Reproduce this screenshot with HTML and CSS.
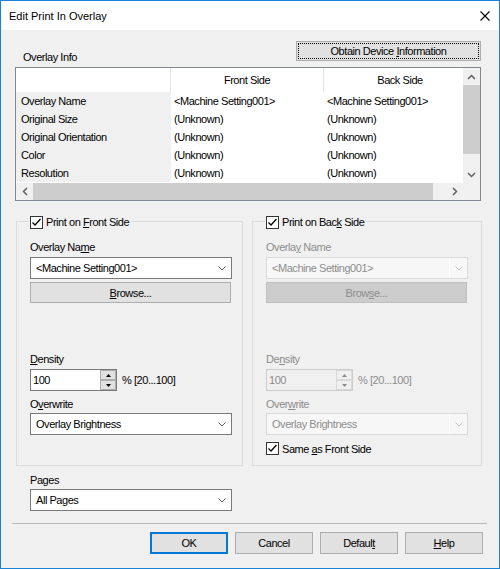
FILE: index.html
```html
<!DOCTYPE html>
<html lang="en">
<head>
    <meta charset="UTF-8">
    <title>Edit Print In Overlay</title>
    <link rel="stylesheet" href="styles.css">
</head>
<body>
<div class="window">
    <div class="titlebar">
        <span class="title">Edit Print In Overlay</span>
        <svg class="close" width="10" height="10" viewBox="0 0 10 10"><path d="M0.5 0.5L9.5 9.5M9.5 0.5L0.5 9.5" stroke="#000" stroke-width="1.1"/></svg>
    </div>

    <div class="client">
        <div class="info-head">
            <span class="caption">Overlay Info</span>
            <button class="btn btn-obtain">Obtain Device <u>I</u>nformation</button>
        </div>

        <!-- overlay info list -->
        <div class="listview">
            <div class="lv-view">
                <div class="lv-row lv-header">
                    <div class="cell"></div>
                    <div class="cell">Front Side</div>
                    <div class="cell">Back Side</div>
                </div>
                <div class="lv-row">
                    <div class="cell name">Overlay Name</div>
                    <div class="cell">&lt;Machine Setting001&gt;</div>
                    <div class="cell">&lt;Machine Setting001&gt;</div>
                </div>
                <div class="lv-row">
                    <div class="cell name">Original Size</div>
                    <div class="cell">(Unknown)</div>
                    <div class="cell">(Unknown)</div>
                </div>
                <div class="lv-row">
                    <div class="cell name">Original Orientation</div>
                    <div class="cell">(Unknown)</div>
                    <div class="cell">(Unknown)</div>
                </div>
                <div class="lv-row">
                    <div class="cell name">Color</div>
                    <div class="cell">(Unknown)</div>
                    <div class="cell">(Unknown)</div>
                </div>
                <div class="lv-row">
                    <div class="cell name">Resolution</div>
                    <div class="cell">(Unknown)</div>
                    <div class="cell">(Unknown)</div>
                </div>
            </div>
            <div class="vscroll">
                <span class="sb-arrow"><svg width="9" height="6" viewBox="0 0 9 6"><path d="M1 5L4.5 1.5L8 5" fill="none" stroke="#606060" stroke-width="1.5"/></svg></span>
                <span class="sb-track"><span class="sb-thumb v"></span></span>
                <span class="sb-arrow"><svg width="9" height="6" viewBox="0 0 9 6"><path d="M1 1L4.5 4.5L8 1" fill="none" stroke="#606060" stroke-width="1.5"/></svg></span>
            </div>
            <div class="hscroll">
                <span class="sb-arrow"><svg width="6" height="9" viewBox="0 0 6 9"><path d="M5 1L1.5 4.5L5 8" fill="none" stroke="#606060" stroke-width="1.5"/></svg></span>
                <span class="sb-track"><span class="sb-thumb h"></span></span>
                <span class="sb-arrow"><svg width="6" height="9" viewBox="0 0 6 9"><path d="M1 1L4.5 4.5L1 8" fill="none" stroke="#606060" stroke-width="1.5"/></svg></span>
            </div>
            <div class="corner"></div>
        </div>

        <div class="groups">
            <!-- front side -->
            <div class="group">
                <div class="group-title">
                    <svg class="check" width="13" height="13" viewBox="0 0 13 13"><rect x="0.5" y="0.5" width="12" height="12" fill="#fff" stroke="#333"/><path d="M2.5 6.5L5 9L10.5 3" fill="none" stroke="#000" stroke-width="1.3"/></svg>
                    <span>Print on <u>F</u>ront Side</span>
                </div>
                <div class="field-label lbl-name">Overlay Na<u>m</u>e</div>
                <div class="combo">
                    <span>&lt;Machine Setting001&gt;</span>
                    <svg width="8" height="5" viewBox="0 0 8 5"><path d="M0.5 0.5L4 4L7.5 0.5" fill="none" stroke="#5f5f5f"/></svg>
                </div>
                <button class="btn btn-browse"><u>B</u>rowse...</button>
                <div class="field-label lbl-density"><u>D</u>ensity</div>
                <div class="spin-row">
                    <div class="spin">
                        <span class="spin-text">100</span>
                        <span class="spin-btns">
                            <span class="spin-btn"><svg width="5" height="3" viewBox="0 0 5 3"><path d="M0 3L2.5 0L5 3Z" fill="#000"/></svg></span>
                            <span class="spin-btn"><svg width="5" height="3" viewBox="0 0 5 3"><path d="M0 0L2.5 3L5 0Z" fill="#000"/></svg></span>
                        </span>
                    </div>
                    <span class="range">% [20...100]</span>
                </div>
                <div class="field-label lbl-overwrite">O<u>v</u>erwrite</div>
                <div class="combo combo-tight">
                    <span>Overlay Brightness</span>
                    <svg width="8" height="5" viewBox="0 0 8 5"><path d="M0.5 0.5L4 4L7.5 0.5" fill="none" stroke="#5f5f5f"/></svg>
                </div>
            </div>

            <!-- back side -->
            <div class="group disabled">
                <div class="group-title">
                    <svg class="check" width="13" height="13" viewBox="0 0 13 13"><rect x="0.5" y="0.5" width="12" height="12" fill="#fff" stroke="#333"/><path d="M2.5 6.5L5 9L10.5 3" fill="none" stroke="#000" stroke-width="1.3"/></svg>
                    <span>Print on Bac<u>k</u> Side</span>
                </div>
                <div class="field-label lbl-name">Overla<u>y</u> Name</div>
                <div class="combo">
                    <span>&lt;Machine Setting001&gt;</span>
                    <span class="combo-arrow"><svg width="8" height="5" viewBox="0 0 8 5"><path d="M0.5 0.5L4 4L7.5 0.5" fill="none" stroke="#c4c4c4"/></svg></span>
                </div>
                <button class="btn btn-browse">Brow<u>s</u>e...</button>
                <div class="field-label lbl-density">De<u>n</u>sity</div>
                <div class="spin-row">
                    <div class="spin">
                        <span class="spin-text">100</span>
                        <span class="spin-btns">
                            <span class="spin-btn"><svg width="5" height="3" viewBox="0 0 5 3"><path d="M0 3L2.5 0L5 3Z" fill="#8a8a8a"/></svg></span>
                            <span class="spin-btn"><svg width="5" height="3" viewBox="0 0 5 3"><path d="M0 0L2.5 3L5 0Z" fill="#8a8a8a"/></svg></span>
                        </span>
                    </div>
                    <span class="range">% [20...100]</span>
                </div>
                <div class="field-label lbl-overwrite">Over<u>w</u>rite</div>
                <div class="combo combo-tight">
                    <span>Overlay Brightness</span>
                    <span class="combo-arrow"><svg width="8" height="5" viewBox="0 0 8 5"><path d="M0.5 0.5L4 4L7.5 0.5" fill="none" stroke="#c4c4c4"/></svg></span>
                </div>
                <div class="same-as">
                    <svg class="check" width="13" height="13" viewBox="0 0 13 13"><rect x="0.5" y="0.5" width="12" height="12" fill="#fff" stroke="#333"/><path d="M2.5 6.5L5 9L10.5 3" fill="none" stroke="#000" stroke-width="1.3"/></svg>
                    <span>Same <u>a</u>s Front Side</span>
                </div>
            </div>
        </div>

        <div class="pages">
            <div class="field-label">Pages</div>
            <div class="combo combo-tight">
                <span>All Pages</span>
                <svg width="8" height="5" viewBox="0 0 8 5"><path d="M0.5 0.5L4 4L7.5 0.5" fill="none" stroke="#5f5f5f"/></svg>
            </div>
        </div>

        <div class="separator"></div>

        <div class="actions">
            <button class="btn btn-default">OK</button>
            <button class="btn">Cancel</button>
            <button class="btn">Defaul<u>t</u></button>
            <button class="btn"><u>H</u>elp</button>
        </div>
    </div>
</div>
</body>
</html>
```

FILE: styles.css
```css
* {
    box-sizing: border-box;
}

body {
    margin: 0;
    font-family: "Liberation Sans", Arial, sans-serif;
    font-size: 11px;
    letter-spacing: -0.45px;
    color: #000;
}

.window {
    width: 500px;
    height: 569px;
    border: 1px solid #1883d7;
    background: #f0f0f0;
    display: flex;
    flex-direction: column;
}

.titlebar {
    height: 29px;
    background: #fff;
    display: flex;
    align-items: center;
    justify-content: space-between;
    padding: 0 9px 0 8px;
}

.title {
    letter-spacing: 0;
}

.client {
    flex: 1;
    padding: 11px 18px 0 14px;
    display: flex;
    flex-direction: column;
}

/* buttons */
.btn {
    font: inherit;
    letter-spacing: inherit;
    color: #000;
    background: #e1e1e1;
    border: 1px solid #adadad;
    height: 22px;
    width: 78px;
    padding: 0;
    line-height: 18px;
}

.btn-default {
    border-color: #0078d7;
    box-shadow: inset 0 0 0 1px #0078d7;
}

.info-head {
    display: flex;
    justify-content: space-between;
    align-items: flex-start;
    height: 23px;
}

.caption {
    margin: 10px 0 0 8px;
    line-height: 13px;
}

.btn-obtain {
    width: 185px;
    height: 20px;
    outline: 1px dotted #000;
    outline-offset: -3px;
}

/* list view */
.listview {
    margin-top: 3px;
    height: 134px;
    border: 1px solid #828790;
    background: #fff;
    display: grid;
    grid-template-columns: 1fr 17px;
    grid-template-rows: 1fr 17px;
}

.lv-view {
    overflow: hidden;
}

.lv-row {
    display: grid;
    grid-template-columns: 155px 153px 153px;
    height: 18px;
    line-height: 18px;
    white-space: nowrap;
}

.lv-row .cell {
    padding-left: 3px;
}

.lv-row .cell.name {
    background: #f0f0f0;
    padding-left: 5px;
}

.lv-header {
    height: 24px;
    line-height: 24px;
}

.lv-header .cell {
    text-align: center;
    padding: 0;
    border-right: 1px solid #e5e5e5;
}

.vscroll, .hscroll {
    background: #f0f0f0;
    display: flex;
}

.vscroll {
    flex-direction: column;
}

.sb-arrow {
    width: 17px;
    height: 17px;
    display: flex;
    align-items: center;
    justify-content: center;
    flex-shrink: 0;
}

.sb-track {
    flex: 1;
    display: flex;
}

.vscroll .sb-track {
    flex-direction: column;
}

.sb-thumb {
    background: #cdcdcd;
}

.sb-thumb.v {
    height: 69px;
}

.sb-thumb.h {
    width: 400px;
}

.corner {
    background: #f0f0f0;
}

/* side groups */
.groups {
    display: grid;
    grid-template-columns: 227px 230px;
    column-gap: 9px;
    margin: 20px 0 0 1px;
}

.group {
    border: 1px solid #dcdcdc;
    height: 245px;
    padding: 0 13px;
    display: flex;
    flex-direction: column;
    align-items: flex-start;
}

.group-title {
    display: flex;
    align-items: center;
    gap: 3px;
    height: 13px;
    margin: -6px 0 0 -1px;
    padding: 0 2px 0 1px;
    background: #f0f0f0;
    line-height: 13px;
}

.field-label {
    line-height: 13px;
    height: 13px;
}

.lbl-name {
    margin-top: 12px;
}

.lbl-density {
    margin-top: 50px;
}

.lbl-overwrite {
    margin-top: 7px;
}

.combo {
    width: 202px;
    height: 22px;
    margin-top: 3px;
    border: 1px solid #7a7a7a;
    background: #fff;
    display: flex;
    align-items: center;
    justify-content: space-between;
    padding: 0 5px 0 5px;
    white-space: nowrap;
}

.combo-tight {
    margin-top: 2px;
}

.btn-browse {
    width: 201px;
    height: 21px;
    margin-top: 3px;
}

.spin-row {
    margin-top: 3px;
    display: flex;
    align-items: center;
    gap: 5px;
}

.spin {
    width: 87px;
    height: 22px;
    border: 1px solid #7a7a7a;
    background: #fff;
    display: flex;
}

.spin-text {
    flex: 1;
    padding-left: 2px;
    line-height: 20px;
}

.spin-btns {
    width: 16px;
    display: flex;
    flex-direction: column;
}

.spin-btn {
    height: 10px;
    background: #e1e1e1;
    border: 1px solid #adadad;
    display: flex;
    align-items: center;
    justify-content: center;
}

.same-as {
    margin-top: 7px;
    display: flex;
    align-items: center;
    gap: 3px;
    height: 13px;
}

/* disabled back side */
.disabled .field-label,
.disabled .combo,
.disabled .spin,
.disabled .range,
.disabled .btn-browse {
    color: #8d8d8d;
}

.disabled .combo {
    background: #f7f7f7;
    border-color: #d9d9d9;
    padding-right: 0;
}

.disabled .combo-arrow {
    width: 18px;
    height: 20px;
    border-left: 1px solid #fff;
    display: flex;
    align-items: center;
    justify-content: center;
}

.disabled .btn-browse {
    background: #cccccc;
    border-color: #bfbfbf;
}

.disabled .spin {
    background: #f0f0f0;
    border-color: #cccccc;
}

.disabled .spin-btn {
    background: #f0f0f0;
    border-color: #d9d9d9;
}

/* footer */
.pages {
    margin-top: 8px;
    padding-left: 15px;
}

.separator {
    margin: 12px -6px 0 -3px;
    height: 1px;
    background: #b9b9b9;
}

.actions {
    margin: 8px -2px 0 0;
    display: flex;
    justify-content: flex-end;
    gap: 7px;
}
```
